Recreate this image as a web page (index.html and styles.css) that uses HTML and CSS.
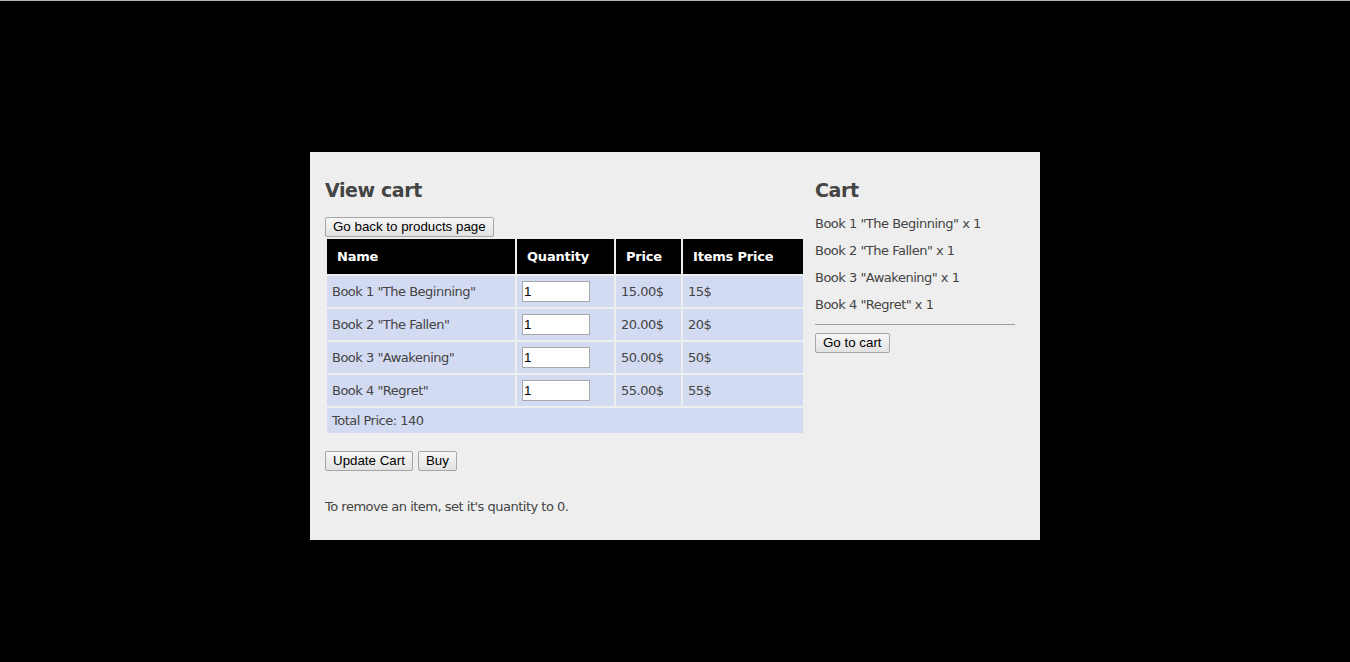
FILE: index.html
```html
<!DOCTYPE html>
<html>
<head>
<meta charset="utf-8">
<title>View cart</title>
<link rel="stylesheet" href="styles.css">
</head>
<body>
<div class="page">
  <div class="main">
    <h2 class="title">View cart</h2>
    <button class="btn btn-block">Go back to products page</button>
    <table class="cart">
      <thead>
        <tr>
          <th class="c-name">Name</th>
          <th class="c-qty">Quantity</th>
          <th class="c-price">Price</th>
          <th class="c-items">Items Price</th>
        </tr>
      </thead>
      <tbody>
        <tr>
          <td>Book 1 "The Beginning"</td>
          <td><input class="qty" type="text" value="1"></td>
          <td>15.00$</td>
          <td>15$</td>
        </tr>
        <tr>
          <td>Book 2 "The Fallen"</td>
          <td><input class="qty" type="text" value="1"></td>
          <td>20.00$</td>
          <td>20$</td>
        </tr>
        <tr>
          <td>Book 3 "Awakening"</td>
          <td><input class="qty" type="text" value="1"></td>
          <td>50.00$</td>
          <td>50$</td>
        </tr>
        <tr>
          <td>Book 4 "Regret"</td>
          <td><input class="qty" type="text" value="1"></td>
          <td>55.00$</td>
          <td>55$</td>
        </tr>
        <tr>
          <td class="total" colspan="4">Total Price: 140</td>
        </tr>
      </tbody>
    </table>
    <div class="actions">
      <button class="btn">Update Cart</button>
      <button class="btn">Buy</button>
    </div>
    <p class="note">To remove an item, set it's quantity to 0.</p>
  </div>
  <div class="side">
    <h2 class="title side-title">Cart</h2>
    <ul class="mini">
      <li>Book 1 "The Beginning" x 1</li>
      <li>Book 2 "The Fallen" x 1</li>
      <li>Book 3 "Awakening" x 1</li>
      <li>Book 4 "Regret" x 1</li>
    </ul>
    <hr class="sep">
    <button class="btn">Go to cart</button>
  </div>
</div>
</body>
</html>
```

FILE: styles.css
```css
html, body {
  margin: 0;
  padding: 0;
}

body {
  background: #000;
  border-top: 1px solid #b4b4b4;
  font-family: "DejaVu Sans", Verdana, sans-serif;
  font-size: 13px;
  letter-spacing: -0.5px;
  color: #444;
}

.page {
  width: 700px;
  margin: 151px auto 0;
  padding: 15px;
  background: #eee;
  display: flex;
  gap: 10px;
  height: 358px;
}

.main {
  width: 480px;
  flex: none;
}

.side {
  width: 200px;
  flex: none;
}

.title {
  margin: 12px 0 15px;
  font-size: 19px;
  line-height: 23px;
  font-weight: bold;
  letter-spacing: -0.4px;
  color: #444;
}

.side-title {
  margin-bottom: 14px;
}

.btn {
  font-family: "Liberation Sans", Arial, sans-serif;
  font-size: 13.333px;
  letter-spacing: 0;
  line-height: 16px;
  height: 20px;
  padding: 0 7px;
  margin: 0;
  color: #000;
  background: linear-gradient(#f7f7f7, #e2e2e2);
  border: 1px solid #a6a6a6;
  border-radius: 2px;
}

.btn-block {
  display: block;
}

.cart {
  border-collapse: separate;
  border-spacing: 2px;
  table-layout: fixed;
  width: 480px;
  margin-top: 0;
}

.cart th {
  background: #000;
  color: #fff;
  text-align: left;
  font-weight: bold;
  padding: 10px;
  height: 14px;
  line-height: 15px;
  letter-spacing: -0.2px;
}

.c-name { width: 168px; }
.c-qty { width: 77px; }
.c-price { width: 45px; }
.c-items { width: 100px; }

.cart td {
  background: #d3dbf3;
  padding: 5px;
  line-height: 15px;
  height: 21px;
}

.cart td.total {
  height: 15px;
}

.qty {
  box-sizing: border-box;
  display: block;
  width: 68px;
  height: 21px;
  margin: 0;
  padding: 0 1px;
  border: 1px solid #a9a9a9;
  background: #fff;
  font-family: "Liberation Sans", Arial, sans-serif;
  font-size: 13.333px;
  letter-spacing: 0;
  color: #000;
}

.actions {
  display: flex;
  gap: 5px;
  margin-top: 16px;
}

.note {
  margin: 28px 0 0;
  line-height: 15px;
}

.mini {
  list-style: none;
  margin: 0;
  padding: 0;
}

.mini li {
  line-height: 15px;
  margin-bottom: 12px;
}

.sep {
  margin: 0 0 7px;
  border: none;
  border-top: 1px solid #9a9a9a;
  border-bottom: 1px solid #eee;
  height: 0;
}
```
